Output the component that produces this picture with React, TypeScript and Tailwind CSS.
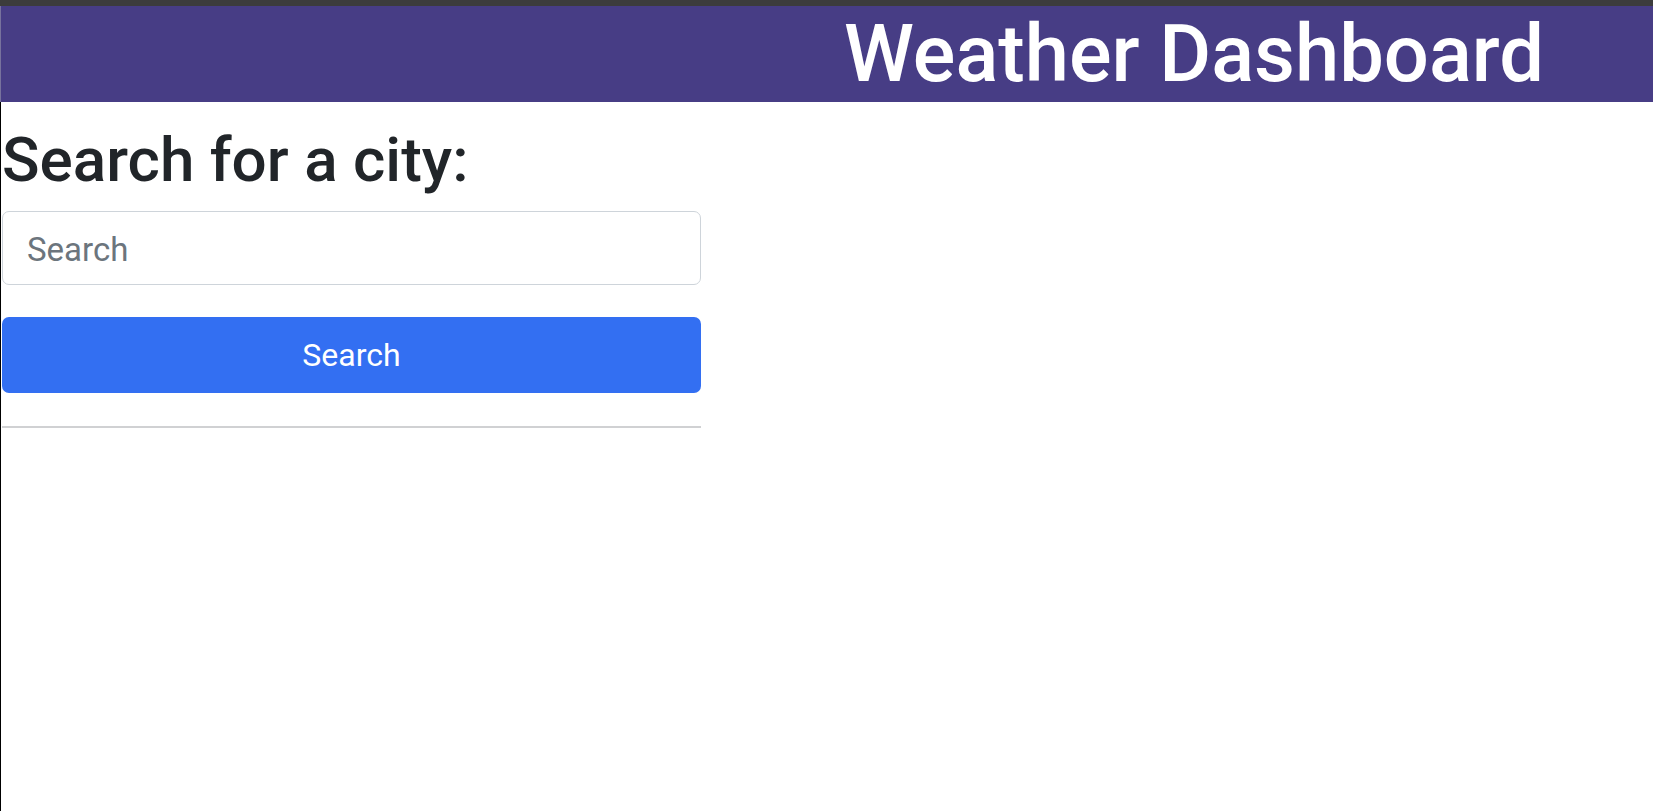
import { useState } from 'react';

export default function App() {
  const [city, setCity] = useState('');

  return (
    <div className="min-h-screen bg-white font-['Roboto','Liberation_Sans',Arial,sans-serif]">
      {/* window chrome strip */}
      <div className="h-[6px] bg-[#3c3c3c]" />

      <div className="border-l border-black min-h-[805px]">
        {/* Header */}
        <header className="-ml-px border-l border-[#77729d] h-[96px] bg-[#473d85] flex justify-end pr-[109px]">
          <h1 className="mt-[8px] text-[79.5px] leading-none text-white font-medium">
            Weather Dashboard
          </h1>
        </header>

        {/* Search panel */}
        <section className="w-[700px] pl-px">
          <h2 className="mt-[19px] h-[78px] text-[62px] leading-[78px] font-medium text-[#212529]">
            Search for a city:
          </h2>

          <input
            type="text"
            value={city}
            onChange={(e) => setCity(e.target.value)}
            placeholder="Search"
            className="mt-[12px] block w-full h-[74px] pl-[24px] pt-[3px] rounded-[7px] border border-[#ced4da] text-[33px] text-[#212529] placeholder:text-[#6c757d] outline-none"
          />

          <button
            type="button"
            className="mt-[32px] block w-full h-[76px] rounded-[7px] bg-[#336ff2] text-[32px] text-white"
          >
            Search
          </button>

          <div className="mt-[33px] h-[2px] bg-[#d0d1d3]" />
        </section>
      </div>
    </div>
  );
}
